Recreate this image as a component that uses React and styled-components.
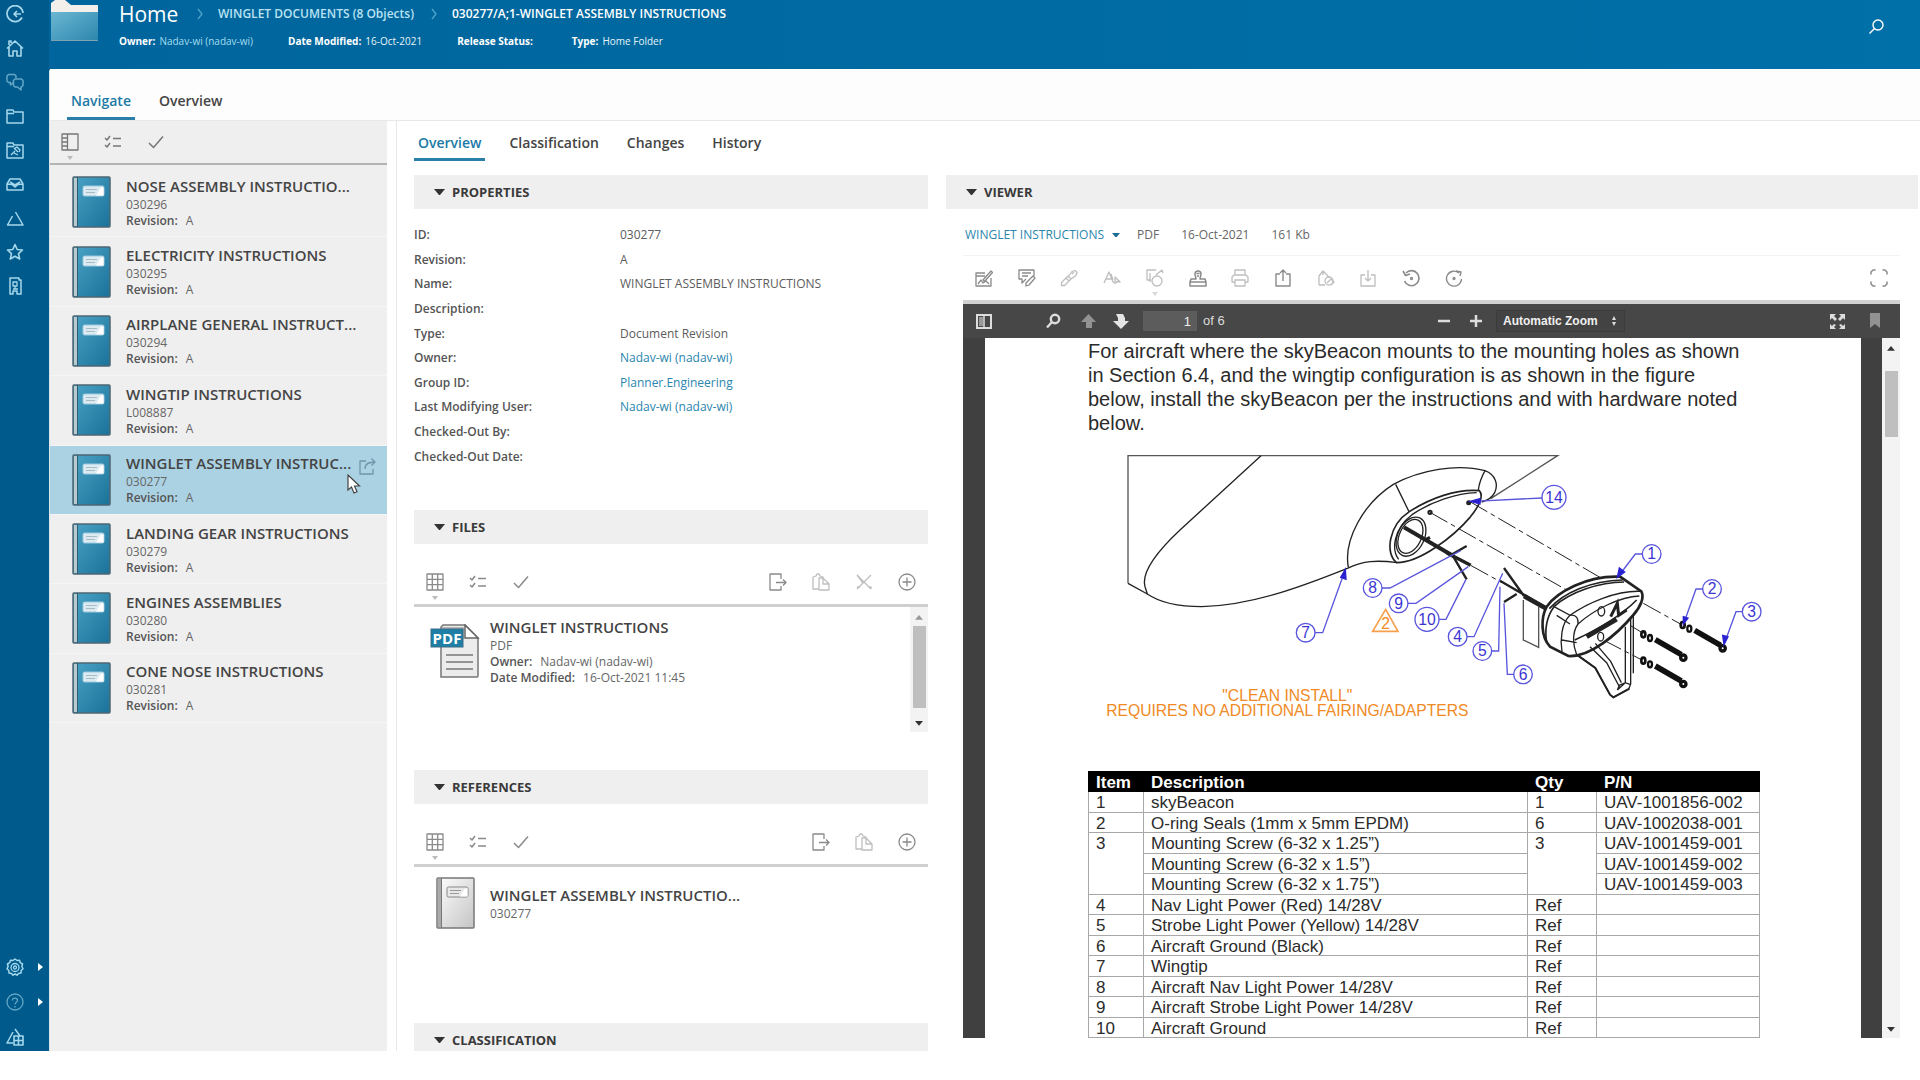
import React from "react";
import styled, { createGlobalStyle, css } from "styled-components";

const GlobalStyle = createGlobalStyle`
  *, *::before, *::after { box-sizing: border-box; }
  body {
    margin: 0;
    background: #fff;
    color: #444;
    font-family: "Open Sans", "Noto Sans", sans-serif;
    font-size: 12px;
    line-height: 16px;
  }
  h1, h2, h3, p, ul, dl, dd, dt { margin: 0; padding: 0; font-weight: inherit; font-size: inherit; }
  ul { list-style: none; }
  button { border: 0; padding: 0; background: none; font: inherit; color: inherit; text-align: left; }
  a { color: inherit; text-decoration: none; }
  svg { display: block; flex: none; }
`;

/* ---------- Shell ---------- */

const Shell = styled.div`
  display: flex;
  height: 100vh;
  padding-bottom: 29px;
  overflow: hidden;
`;

const Rail = styled.nav`
  display: flex;
  flex-direction: column;
  justify-content: space-between;
  width: 49px;
  flex: none;
  padding: 5px 6px;
  background: #005b8c;
  color: #a5d8ec;
`;

const RailGroup = styled.div`
  display: flex;
  flex-direction: column;
  gap: ${(p) => (p.$wide ? "17px" : "16px")};
`;

const RailButton = styled.button`
  display: flex;
  align-items: center;
  justify-content: space-between;
  height: 18px;
  opacity: ${(p) => (p.$dim ? 0.6 : 1)};
`;

const RailRow = styled.div`
  display: flex;
  align-items: center;
  justify-content: space-between;
  color: #a5d8ec;
`;

const Content = styled.div`
  display: flex;
  flex-direction: column;
  flex: 1;
  min-width: 0;
  background: linear-gradient(90deg, #00659c, #0070a8);
`;

const Header = styled.header`
  display: flex;
  gap: 18px;
  height: 69px;
  flex: none;
  padding: 0 35px 0 2px;
  color: #fff;
`;

const HeaderText = styled.div`
  flex: 1;
`;

const Crumbs = styled.div`
  display: flex;
  align-items: center;
  height: 28px;
  font-weight: 600;
`;

const HomeTitle = styled.h1`
  width: 77px;
  font-size: 21px;
  line-height: 28px;
  font-weight: 400;
`;

const Crumb = styled.a`
  padding: 0 16px 0 14px;
  color: ${(p) => (p.$current ? "#fff" : "#b9e2f2")};
`;

const Meta = styled.div`
  display: flex;
  align-items: center;
  gap: 35px;
  height: 26px;
  font-size: 10px;
`;

const MetaItem = styled.span`
  b { font-weight: 700; margin-right: 4px; }
  span { color: ${(p) => (p.$link ? "#a5dcf0" : "#e6f4fa")}; }
`;

const SearchButton = styled.button`
  align-self: flex-start;
  padding-top: 18px;
`;

const Panel = styled.div`
  display: flex;
  flex-direction: column;
  flex: 1;
  min-height: 0;
  border-left: 1px solid #d9e4ea;
  border-top-left-radius: 3px;
  background: #fff;
`;

const TabBar = styled.div`
  display: flex;
  gap: 20px;
  flex: none;
  height: ${(p) => p.$height}px;
  ${(p) =>
    p.$primary &&
    css`
      padding-left: 17px;
      background: #fdfdfd;
      border-bottom: 1px solid #e8e8e8;
    `}
`;

const Tab = styled.button`
  display: flex;
  align-items: flex-start;
  padding: ${(p) => (p.$primary ? "22px" : "12px")} 4px 0;
  border-bottom: 3px solid ${(p) => (p.$active ? "#2a7fa8" : "transparent")};
  color: ${(p) => (p.$active ? "#1b7aa6" : "#444")};
  font-size: 14px;
  line-height: 20px;
  font-weight: 600;
`;

const Columns = styled.div`
  display: flex;
  flex: 1;
  min-height: 0;
`;

/* ---------- Navigation list ---------- */

const NavPane = styled.section`
  display: flex;
  flex-direction: column;
  width: 337px;
  flex: none;
  background: #efefef;
`;

const NavTools = styled.div`
  display: flex;
  align-items: center;
  gap: 25px;
  height: 44px;
  padding: 0 11px;
  border-bottom: 2px solid #b4b4b4;
  color: #777;
`;

const NavList = styled.ul`
  display: grid;
  grid-template-columns: minmax(0, 1fr);
  grid-auto-rows: 1fr;
  height: 558px;
  padding-top: 3px;
`;

const NavItem = styled.li`
  position: relative;
  display: flex;
  align-items: center;
  padding: 0 11px 0 22px;
  border-bottom: 1px solid #f5f5f5;
  background: ${(p) => (p.$selected ? "#abd2e3" : "transparent")};
`;

const ShareButton = styled.button`
  align-self: flex-start;
  margin-left: auto;
  padding-top: 11px;
  color: #6f97aa;
`;

const Pointer = styled.svg`
  position: absolute;
  left: 297px;
  top: 28px;
`;

const Entry = styled.button`
  display: block;
  margin-left: 15px;
  white-space: nowrap;
`;

const EntryTitle = styled.span`
  display: block;
  color: #444;
  font-size: 15px;
  line-height: 21px;
  font-weight: 600;
`;

const EntryLine = styled.span`
  display: block;
  color: #666;
  b { margin-right: 8px; font-weight: 600; color: #555; }
`;

/* ---------- Detail ---------- */

const Detail = styled.main`
  display: flex;
  flex-direction: column;
  flex: 1;
  min-width: 0;
  margin-left: 9px;
  padding: 0 2px 0 17px;
  border-left: 1px solid #e6e6e6;
`;

const DetailGrid = styled.div`
  display: grid;
  grid-template-columns: 514fr 972fr;
  gap: 18px;
  flex: 1;
  min-height: 0;
  padding-top: 14px;
`;

const DetailColumn = styled.div`
  display: flex;
  flex-direction: column;
  min-width: 0;
  min-height: 0;
  overflow: hidden;
`;

const SectionBar = styled.h2`
  display: flex;
  align-items: center;
  gap: 7px;
  height: 34px;
  flex: none;
  padding-left: 20px;
  background: #efefef;
  color: #3a3a3a;
  font-size: 13px;
  font-weight: 700;
`;

const Properties = styled.dl`
  display: grid;
  grid-template-columns: 206px 1fr;
  grid-auto-rows: 1fr;
  align-items: center;
  height: 246px;
  flex: none;
  margin: 14px 0 41px;
  dt { font-weight: 600; color: #555; }
  dd { color: #5c5c5c; }
  a { color: #2a86ad; }
`;

const Tools = styled.div`
  display: flex;
  align-items: center;
  gap: 25px;
  height: 47px;
  flex: none;
  margin-top: 16px;
  padding: 0 12px;
  border-bottom: 3px solid #cfcfcf;
  color: #8a8a8a;
`;

const ToolSpacer = styled.span`
  flex: 1;
`;

const IconButton = styled.button`
  position: relative;
  width: 18px;
  height: 18px;
  opacity: ${(p) => (p.$dim ? 0.55 : 1)};
`;

const Caret = styled.svg`
  position: absolute;
  left: 6px;
  top: 23px;
`;

const Results = styled.div`
  display: flex;
  flex: none;
  height: ${(p) => p.$height}px;
  margin-bottom: 38px;
`;

const ResultItem = styled.div`
  display: flex;
  align-items: ${(p) => (p.$centered ? "center" : "flex-start")};
  align-self: flex-start;
  flex: 1;
  padding: ${(p) => (p.$centered ? "9px 0 0 22px" : "10px 0 0 16px")};
`;

const ResultIcon = styled.div`
  width: 45px;
  padding-top: ${(p) => (p.$drop ? "7px" : "0")};
`;

const Scrollbar = styled.div`
  display: flex;
  flex-direction: column;
  align-items: center;
  width: 18px;
  flex: none;
  padding: 8px 0 6px;
  background: #f3f3f3;
`;

const Thumb = styled.div`
  width: 13px;
  height: ${(p) => p.$height}px;
  margin-top: ${(p) => p.$top}px;
  margin-bottom: auto;
  background: #bfbfbf;
`;

/* ---------- Viewer ---------- */

const ViewerBody = styled.div`
  display: flex;
  flex-direction: column;
  flex: 1;
  min-height: 0;
  padding: 0 18px 13px 17px;
`;

const FileInfo = styled.div`
  display: flex;
  align-items: center;
  gap: 22px;
  height: 47px;
  flex: none;
  padding: 6px 0 0 2px;
  border-bottom: 1px solid #f3f3f3;
  color: #666;
`;

const FilePicker = styled.button`
  display: flex;
  align-items: center;
  gap: 8px;
  margin-right: -5px;
  color: #2a86ad;
`;

const ViewerTools = styled.div`
  display: flex;
  align-items: center;
  justify-content: space-between;
  height: 48px;
  flex: none;
  padding: 0 12px;
  border-bottom: 4px solid #d2d2d2;
  color: #8a8a8a;
`;

const ToolStrip = styled.div`
  display: flex;
  justify-content: space-between;
  width: 488px;
`;

const PdfFrame = styled.div`
  display: flex;
  flex-direction: column;
  flex: 1;
  min-height: 0;
  background: #404040;
  font-family: "Liberation Sans", Arial, sans-serif;
`;

const PdfTools = styled.div`
  display: flex;
  align-items: center;
  height: 34px;
  flex: none;
  padding: 0 19px 0 12px;
  background: #474747;
  color: #ddd;
  font-size: 13px;
`;

const PdfButton = styled.button`
  margin-right: ${(p) => p.$after || 0}px;
  opacity: ${(p) => (p.$dim ? 0.5 : 1)};
`;

const PageInput = styled.input`
  width: 54px;
  height: 20px;
  margin: 0 6px 0 14px;
  padding: 0 6px;
  border: 0;
  background: #5c5c5c;
  color: #f0f0f0;
  font: 13px "Liberation Sans", Arial, sans-serif;
  text-align: right;
`;

const ZoomBox = styled.label`
  display: flex;
  align-items: center;
  width: 129px;
  height: 22px;
  padding: 0 7px 0 6px;
  background: #434343;
  border: 1px solid #3c3c3c;
`;

const ZoomSelect = styled.select`
  flex: 1;
  min-width: 0;
  appearance: none;
  border: 0;
  padding: 0;
  background: transparent;
  color: #f0f0f0;
  font: 700 12px "Liberation Sans", Arial, sans-serif;
`;

const PdfEnd = styled.div`
  display: flex;
  align-items: center;
  margin-left: 204px;
`;

const PdfStage = styled.div`
  display: flex;
  flex: 1;
  min-height: 0;
  padding-left: 22px;
`;

const PdfPage = styled.article`
  flex: 1;
  min-width: 0;
  margin-right: 21px;
  padding: 0 102px 0 103px;
  overflow: hidden;
  background: #fff;
  color: #2b2b2b;
`;

const Paragraph = styled.p`
  padding-top: 1px;
  font-size: 20px;
  line-height: 24px;
  span { display: block; white-space: nowrap; }
`;

const Figure = styled.svg`
  width: 100%;
  margin: 5px 0 31px;
  overflow: visible;
  font-family: "Liberation Sans", Arial, sans-serif;
`;

const Parts = styled.table`
  width: 100%;
  height: 267px;
  table-layout: fixed;
  border-collapse: collapse;
  font-size: 17px;
  line-height: 16px;
  th, td {
    padding: 3px 7px 0;
    border: 1px solid #a8a8a8;
    text-align: left;
    vertical-align: top;
    white-space: nowrap;
  }
  th { background: #000; color: #fff; border-color: #000; font-weight: 700; }
`;

const Col = styled.col`
  width: ${(p) => p.$w}px;
`;

/* ---------- Icons ---------- */

const Icon = ({ size = 18, sw = 1.3, children }) => (
  <svg width={size} height={size} viewBox="0 0 18 18" fill="none" stroke="currentColor" strokeWidth={sw} strokeLinejoin="round" aria-hidden="true">
    {children}
  </svg>
);

const Triangle = ({ dir = "down", w = 11, color = "#333" }) => {
  const pts = { down: "0,0 10,0 5,6", up: "0,6 10,6 5,0" }[dir];
  return (
    <svg width={w} height={(w * 6) / 10} viewBox="0 0 10 6" aria-hidden="true">
      <polygon points={pts} fill={color} />
    </svg>
  );
};

const icons = {
  back: <><path d="M16 12.500A8 8 0 1 1 17 8" strokeWidth="1.700" /><path d="M15 9H8M11 6 8 9l3 3" strokeWidth="1.700" /></>,
  home: <><path d="M1 9.500 9 2l8 7.500M3 8v9h4v-5h4v5h4V8M3 6V2h2v2" strokeWidth="1.600" /></>,
  chat: <><path d="M7.500 9.500 4.500 12V9.500H2.500L1 8V3l1.500-1.500h6L10 3v2.500" strokeWidth="1.500" /><path d="M9 6h6.500L17 7.500v5L15.500 14H15v3l-3.500-3H9l-1.500-1.500v-5z" strokeWidth="1.500" /></>,
  folder: <path d="M1 3h6l1 2h9v11H1zM1 6.500h7" strokeWidth="1.500" />,
  folderPin: <><path d="M1 2h6l1 2h9v13H1zM1 5.500h7" strokeWidth="1.500" /><path d="m5 14 4-4m-1-3 4 4m-3-4 2-1 3 3-1 2M8 12l4 2" /></>,
  inbox: <><path d="M1 9v6h16V9l-3-5H4zM1 9l5 .5 3 2.500 3-2.500 5-.5M4 7l5 3 5-3" strokeWidth="1.500" /></>,
  triangle: <path d="M9.500 3 17 16H1.500L6.500 7" strokeWidth="1.500" />,
  star: <path d="m9 1.500 2.200 5 5.300.5-4 3.600 1.200 5.400L9 13.200 4.300 16l1.200-5.400-4-3.600 5.300-.5z" strokeWidth="1.600" />,
  doc: <><path d="M4 1h9v2h2v14h-4v-3H7v3H4z" strokeWidth="1.500" /><path d="M7 5h4v4H7zM9 9v3M7 12h5" /></>,
  gear: <><path d="m9 1 2 1.500 2.500-.2.800 2.400L16.500 6l-.6 2.500 1.100 2.300-1.800 1.700-.2 2.500-2.500.4L11 17.200 9 16l-2 1.200-1.500-1.800-2.500-.4-.2-2.500L1 10.800l1.100-2.300L1.500 6l2.200-1.300.800-2.400 2.500.2z" strokeWidth="1.500" /><circle cx="9" cy="9.500" r="4" /><circle cx="9" cy="9.500" r="1.500" /></>,
  help: <><circle cx="9" cy="9" r="8" /><path d="M6.500 7.500C6.500 4 11.500 4.500 11.500 7.500 11.500 9 9 9 9 11.500M9 13v1.500" /></>,
  warnGrid: <><path d="m9 1 5 7M7 4 1 15h6" strokeWidth="1.500" /><path d="M8 8h9v9H8zM8 12.500h9M12.500 8v9" strokeWidth="1.600" /></>,
  search: <><circle cx="11" cy="7" r="5" strokeWidth="1.400" /><path d="m7.500 10.500-5 5" strokeWidth="1.400" /></>,
  pane: <><path d="M1 1h16v16H1zM6.500 1v16M1 5h5.500M1 9h5.500M1 13h5.500" /></>,
  list: <><path d="m1 5 2 2 3-4M1 12l2 2 3-4M9 5.500h8M9 13h8" strokeWidth="1.500" /></>,
  check: <path d="m2 10 4.500 4.500L16 3.500" strokeWidth="1.500" />,
  grid: <path d="M1 1h16v16H1zM1 6.300h16M1 11.700h16M6.300 1v16M11.700 1v16" />,
  exit: <><path d="M12 6V1H1v16h11v-4M7 9.500h10M14 6.500l3 3-3 3" /></>,
  paste: <><path d="M7 16H1V4l3-1 1-2h2l1 2 3 1v2" /><path d="M7 5v12h10v-6l-6-6zM11 5v6h6" /></>,
  cut: <path d="m2 2 14 14M16 2 2 16M2 2l6 8M14 14h2v2M2 14h3" />,
  plus: <><circle cx="9" cy="9" r="8" /><path d="M9 4.500v9M4.500 9h9" /></>,
  share: <><path d="M8 4H2v13h13v-5M7 12c0-5 3-7 10-7M13.500 1.500 17 5l-3.500 3.500" /></>,
  annotate: <><path d="M10 4H1v13h15V9M1 7h9" /><path d="m8 11 8-9 1.500 1.500-8 9zM3 15l3-4 2 3 3-2 3 3" /></>,
  comment: <><path d="M16 7V1H1v9h3v4l4-4M4 4h9M4 7h6" /><path d="m8 14 7-7 2 2-6 7-3 1z" /></>,
  pen: <path d="M1.500 13.500 6 9l3 3-4.500 4.500H1.500zM6 9l2-2 3 3-2 2M8.500 7.500l3.500-5 3-1 2 2-1 3-5 3.500M12 5l2-2" />,
  text: <path d="m1 14 5-11 4.500 11M3 10h6M8 5l2 6M12 8l5 5-3-.5-2 2z" />,
  shapes: <><path d="M10 1H1v10h4M4 4v9M10 6l6-5 1 3" /><circle cx="11" cy="12" r="5" /></>,
  stamp: <><path d="M6 5a3 3 0 1 1 6 0c0 2-1 3-1 5h5l1 3H1l1-3h5c0-2-1-3-1-5zM1 13h16v4H1z" strokeWidth="1.500" /><path d="M7.500 4.500h3M8 7h2" strokeWidth="1.500" /></>,
  print: <><path d="M4 6V1h10v5M4 13H1V8l2-2h12l2 2v5h-3M4 11h10v6H4z" /></>,
  upload: <><path d="M6 5H2v12h14V5h-4M9 12V1M6 4l3-3 3 3" strokeWidth="1.400" /></>,
  packageOut: <><path d="M2 16V7l4-5 5 5v2M2 16h6M6 2v4" /><circle cx="12" cy="12" r="4" /><path d="m10 14 4-4 3 3-3 3" /></>,
  download: <><path d="M6 6H2v11h14V6h-4M9 1v11M6 9l3 3 3-3" /></>,
  undo: <><path d="M4 4a7.500 7.500 0 1 1-1.500 8M1 2l2.500 4.500L8 5" strokeWidth="1.600" /><circle cx="9.500" cy="9.500" r="1" /></>,
  redo: <><path d="M14 4a7.500 7.500 0 1 0 2.500 6M11 2l5 1-1 4" strokeWidth="1.400" /><circle cx="9" cy="9.500" r="1" /></>,
  expand: <path d="M1 5.500V3l2-2h2.500M12.500 1H15l2 2v2.500M17 12.500V15l-2 2h-2.500M5.500 17H3l-2-2v-2.500" strokeWidth="1.500" />,
};

const Book = ({ gray, h = 52 }) => {
  const id = gray ? "bookGray" : "bookBlue";
  return (
    <svg width="39" height={h} viewBox="0 0 39 52" aria-hidden="true">
      <defs>
        <linearGradient id={id} x1="0" y1="0" x2="1" y2="1">
          <stop offset="0" stopColor={gray ? "#fff" : "#4ba3c7"} />
          <stop offset="1" stopColor={gray ? "#c4c4c4" : "#1a7299"} />
        </linearGradient>
      </defs>
      <rect x="1" y="1" width="37" height="50" rx="1" fill={`url(#${id})`} stroke={gray ? "#777" : "#4d6773"} strokeWidth="1.500" />
      <rect x="2" y="2" width="3" height="48" fill={gray ? "#aaa" : "#b9c9d0"} />
      <path d="M5.500 1v50" stroke={gray ? "#777" : "#2f5d70"} />
      <rect x="11" y="10" width="21" height="10" rx="1.500" fill={gray ? "#e8e8e8" : "#dcebf2"} stroke={gray ? "#888" : "#9ccadd"} />
      <path d="M14 13.500h11M14 16.500h9" stroke={gray ? "#999" : "#a9bcc5"} />
      <path d="m24 19.500 5-8h2.500v8z" fill="#fff" />
    </svg>
  );
};

const Folder = () => (
  <svg width="50" height="42" viewBox="0 0 50 42" aria-hidden="true">
    <defs>
      <linearGradient id="folderFill" x1="0" y1="0" x2="1" y2="1">
        <stop offset="0" stopColor="#6cb7d2" />
        <stop offset="1" stopColor="#2b86ad" />
      </linearGradient>
    </defs>
    <path d="M0 14V3L4 0h10l6 5h27v9z" fill="#f3f0ec" />
    <path d="M0 12h47v29H0z" fill="url(#folderFill)" />
    <path d="M0 40.500h47" stroke="#7fa3b3" />
  </svg>
);

const PdfFile = () => (
  <svg width="50" height="54" viewBox="0 0 50 54" aria-hidden="true">
    <path d="M11 3 13 1h22l13 13v38a1 1 0 0 1-1 1H11z" fill="#ececec" stroke="#777" strokeWidth="1.500" />
    <path d="M12 3h22v12H12z" fill="#b5b5b5" />
    <path d="M35 1v13h13z" fill="#fff" stroke="#666" strokeWidth="1.500" />
    <path d="M16 31h27M16 38h27M16 45h27" stroke="#777" strokeWidth="1.700" />
    <rect x="1" y="5" width="32" height="18" fill="#1f7ea6" stroke="#3c6c82" />
    <text x="17" y="20" textAnchor="middle" fontFamily="Open Sans, sans-serif" fontSize="15" fontWeight="700" fill="#fff">PDF</text>
  </svg>
);

const Tool = ({ name, label, dim, caret }) => (
  <IconButton type="button" aria-label={label} $dim={dim}>
    <Icon>{icons[name]}</Icon>
    {caret && (
      <Caret width="6" height="4" viewBox="0 0 6 4" aria-hidden="true">
        <path d="M0 0h6L3 4z" fill="#bbb" />
      </Caret>
    )}
  </IconButton>
);

/* ---------- Drawing of the wingtip assembly ---------- */

const callouts = [
  { n: "14", x: 1362, y: 172, r: 36, line: "M1326 174 L1120 184", tip: "1110,184 1140,176 1140,192" },
  { n: "1", x: 1655, y: 342, r: 28, line: "M1627 342 H1606 L1556 408", tip: "1552,412 1558,384 1574,396" },
  { n: "2", x: 1836, y: 447, r: 28, line: "M1808 447 H1788 L1752 548", tip: "1750,552 1750,530 1764,534" },
  { n: "3", x: 1955, y: 515, r: 28, line: "M1927 515 H1908 L1874 608", tip: "1872,614 1868,586 1884,590" },
  { n: "8", x: 818, y: 444, r: 28, line: "M846 444 H870 L1082 332" },
  { n: "9", x: 896, y: 490, r: 28, line: "M924 490 H948 L1105 380" },
  { n: "10", x: 981, y: 538, r: 36, line: "M1017 538 H1038 L1098 418" },
  { n: "7", x: 617, y: 578, r: 28, line: "M645 578 H668 L732 400", tip: "736,388 722,412 738,418" },
  { n: "4", x: 1073, y: 590, r: 28, line: "M1101 590 H1122 L1208 400" },
  { n: "5", x: 1147, y: 633, r: 28, line: "M1175 633 H1196 L1200 440" },
  { n: "6", x: 1269, y: 703, r: 28, line: "M1241 703 H1222 L1212 490" },
];

const Screw = ({ x, y }) => (
  <g transform={`translate(${x} ${y})`}>
    <ellipse cx="0" cy="0" rx="6" ry="9" strokeWidth="8" />
    <ellipse cx="20" cy="11" rx="6" ry="9" strokeWidth="7" />
    <path d="m36 16 78 45" strokeWidth="17" />
    <circle cx="120" cy="70" r="8" strokeWidth="10" />
  </g>
);

const Wingtip = () => (
  <Figure viewBox="-36 0 2013 900" role="img" aria-label="Wingtip assembly drawing">
    <g fill="none" stroke="#222" strokeWidth="4">
      <path d="M84 430V47H1373L1172 176" stroke="#555" />
      <path d="M84 430 142 462C180 488 230 500 305 500 450 496 590 446 742 385 790 362 830 360 892 368" />
      <path d="M483 47 240 270C160 345 124 400 135 440L142 462" />
      <path d="M745 382C730 300 790 190 880 133 960 90 1070 70 1155 92 1186 104 1196 132 1184 158 1176 174 1160 182 1145 186M887 133l40 82M1155 92c-12 22-18 40-20 58" />
      <path d="M890 368C854 340 866 256 928 215 990 175 1070 146 1138 152 1152 168 1136 200 1110 232 1060 290 960 368 890 368z" strokeWidth="5" />
      <path d="M896 358C874 330 880 266 936 224 995 184 1070 160 1130 158" />
      <g transform="rotate(25 933 290)">
        <ellipse cx="933" cy="290" rx="40" ry="62" />
        <ellipse cx="931" cy="290" rx="33" ry="54" />
      </g>
      <circle cx="990" cy="217" r="5" strokeWidth="6" />
      <circle cx="1106" cy="188" r="4" strokeWidth="7" />
      <path d="M912 262 1060 348" strokeWidth="12" />
      <path d="m1040 338 72 38M976 300l14-8" strokeWidth="10" />
      <path d="m1054 344 46-26M1060 350l40 68" strokeWidth="7" />
      <g strokeDasharray="60 12 14 12" strokeWidth="3">
        <path d="M990 217 1400 450" />
        <path d="M1110 185 1510 418" />
        <path d="M1112 376 1206 428" />
        <path d="M1630 490 1745 554" />
        <path d="M1590 556 1630 580M1510 600 1626 660" />
      </g>
      <g transform="translate(900 60)">
        <path d="M312 324 372 408M300 362 440 444M312 426 350 402" strokeWidth="7" />
        <path d="M372 408 440 446" strokeWidth="14" />
        <path d="M370 420V540L416 562V440" stroke="#555" />
        <path d="M440 440C470 396 560 346 660 350L724 394C734 412 722 440 700 465 650 524 570 592 505 588L450 560C422 530 422 474 440 440z" fill="#fff" strokeWidth="8" />
        <path d="M448 446C490 400 570 362 668 360M440 548C434 510 440 470 462 440 510 396 600 366 672 366" strokeWidth="5" />
        <path d="M462 440 510 466C560 430 650 390 724 394M510 466C484 490 480 540 486 576M534 492C580 450 660 410 718 408M534 492C514 520 520 560 530 584M486 540 530 548M510 466C530 462 536 478 534 492M470 466l40 26" />
        <path d="M524 540C590 510 660 470 710 420" strokeWidth="5" />
        <ellipse cx="604" cy="454" rx="10" ry="14" />
        <ellipse cx="602" cy="530" rx="9" ry="13" />
        <path d="M560 530 650 478" strokeWidth="14" />
        <path d="M632 470 652 430 656 466 680 450" strokeWidth="9" />
        <path d="M530 584 586 624 630 704 640 712 686 688 692 672V470M676 500V668L652 690M570 560 620 608 660 684M586 550 632 604 664 668M652 690l6-14 18-8 16 6M700 466V640" strokeWidth="4" />
        <path d="M530 584 586 624 630 704 640 712 688 686" strokeWidth="6" />
      </g>
      <g stroke="#111">
        <Screw x={1748} y={555} />
        <Screw x={1630} y={583} />
        <Screw x={1630} y={662} />
      </g>
    </g>
    <g stroke="#5a55dc" fill="none" strokeWidth="4">
      {callouts.map((c) => (
        <React.Fragment key={c.n}>
          <circle cx={c.x} cy={c.y} r={c.r} />
          <path d={c.line} />
          {c.tip && <polygon points={c.tip} fill="#2a22d0" stroke="#2a22d0" />}
        </React.Fragment>
      ))}
    </g>
    <g fill="#3a34d2" fontSize="47" textAnchor="middle">
      {callouts.map((c) => (
        <text key={c.n} x={c.x} y={c.y + 16}>{c.n}</text>
      ))}
    </g>
    <path d="M857 508 894 574H818z" fill="none" stroke="#f5a04c" strokeWidth="5" />
    <g fill="#f08a24" textAnchor="middle" fontSize="47">
      <text x="857" y="568">2</text>
      <text x="562" y="782">"CLEAN INSTALL"</text>
      <text x="562" y="828">REQUIRES NO ADDITIONAL FAIRING/ADAPTERS</text>
    </g>
  </Figure>
);

/* ---------- Data ---------- */

const documents = [
  ["NOSE ASSEMBLY INSTRUCTIO...", "030296"],
  ["ELECTRICITY INSTRUCTIONS", "030295"],
  ["AIRPLANE GENERAL INSTRUCT...", "030294"],
  ["WINGTIP INSTRUCTIONS", "L008887"],
  ["WINGLET ASSEMBLY INSTRUC...", "030277"],
  ["LANDING GEAR INSTRUCTIONS", "030279"],
  ["ENGINES ASSEMBLIES", "030280"],
  ["CONE NOSE INSTRUCTIONS", "030281"],
];

const properties = [
  ["ID:", "030277"],
  ["Revision:", "A"],
  ["Name:", "WINGLET ASSEMBLY INSTRUCTIONS"],
  ["Description:", ""],
  ["Type:", "Document Revision"],
  ["Owner:", "Nadav-wi (nadav-wi)", true],
  ["Group ID:", "Planner.Engineering", true],
  ["Last Modifying User:", "Nadav-wi (nadav-wi)", true],
  ["Checked-Out By:", ""],
  ["Checked-Out Date:", ""],
];

const viewerTools = [
  ["annotate", "Markup"],
  ["comment", "Comment"],
  ["pen", "Pen", true],
  ["text", "Text", true],
  ["shapes", "Shapes", true, true],
  ["stamp", "Stamp"],
  ["print", "Print", true],
  ["upload", "Export"],
  ["packageOut", "Package", true],
  ["download", "Download", true],
  ["undo", "Undo"],
  ["redo", "Redo"],
];

const refRows = [
  ["4", "Nav Light Power (Red) 14/28V"],
  ["5", "Strobe Light Power (Yellow) 14/28V"],
  ["6", "Aircraft Ground (Black)"],
  ["7", "Wingtip"],
  ["8", "Aircraft Nav Light Power 14/28V"],
  ["9", "Aircraft Strobe Light Power 14/28V"],
  ["10", "Aircraft Ground"],
];

const railIcons = [
  ["back", "Back"],
  ["home", "Home"],
  ["chat", "Discussions", true],
  ["folder", "Folders"],
  ["folderPin", "Pinned folders"],
  ["inbox", "Inbox"],
  ["triangle", "Changes"],
  ["star", "Favorites"],
  ["doc", "Documents"],
];

/* ---------- Page parts ---------- */

const Section = ({ children }) => (
  <SectionBar>
    <Triangle />
    {children}
  </SectionBar>
);

const Chevron = () => (
  <svg width="8" height="12" viewBox="0 0 8 12" fill="none" stroke="#4fa5cc" strokeWidth="1.300" aria-hidden="true">
    <path d="m2 1 4 5-4 5" />
  </svg>
);

const SideRail = () => (
  <Rail aria-label="Main">
    <RailGroup>
      {railIcons.map(([name, label, dim]) => (
        <RailButton key={name} type="button" aria-label={label} $dim={dim}>
          <Icon>{icons[name]}</Icon>
        </RailButton>
      ))}
    </RailGroup>
    <RailGroup $wide>
      {[["gear", "Settings", false, true], ["help", "Help", true, true], ["warnGrid", "Alerts", false, false]].map(([name, label, dim, arrow]) => (
        <RailRow key={name}>
          <RailButton type="button" aria-label={label} $dim={dim}>
            <Icon>{icons[name]}</Icon>
          </RailButton>
          {arrow && (
            <svg width="5" height="8" viewBox="0 0 5 8" aria-hidden="true">
              <path d="M0 0l5 4-5 4z" fill="#fff" />
            </svg>
          )}
        </RailRow>
      ))}
    </RailGroup>
  </Rail>
);

const Navigation = () => (
  <NavPane>
    <NavTools>
      <Tool name="pane" label="View" caret />
      <Tool name="list" label="Select multiple" />
      <Tool name="check" label="Select" />
    </NavTools>
    <NavList>
      {documents.map(([title, id], i) => (
        <NavItem key={id} $selected={i === 4}>
          <Book />
          <Entry type="button">
            <EntryTitle>{title}</EntryTitle>
            <EntryLine>{id}</EntryLine>
            <EntryLine><b>Revision:</b>A</EntryLine>
          </Entry>
          {i === 4 && (
            <>
              <ShareButton type="button" aria-label="Open">
                <Icon>{icons.share}</Icon>
              </ShareButton>
              <Pointer width="14" height="20" viewBox="0 0 14 20" aria-hidden="true">
                <path d="M1 1v15l3.500-3 2.500 6 3-1.300-2.500-5.700H12.500z" fill="#fff" stroke="#444" strokeWidth="1.200" />
              </Pointer>
            </>
          )}
        </NavItem>
      ))}
    </NavList>
  </NavPane>
);

const Summary = () => (
  <DetailColumn>
    <Section>PROPERTIES</Section>
    <Properties>
      {properties.map(([label, value, link]) => (
        <React.Fragment key={label}>
          <dt>{label}</dt>
          <dd>{link ? <a href="#open">{value}</a> : value}</dd>
        </React.Fragment>
      ))}
    </Properties>
    <Section>FILES</Section>
    <Tools>
      <Tool name="grid" label="View" caret />
      <Tool name="list" label="Select multiple" />
      <Tool name="check" label="Select" />
      <ToolSpacer />
      <Tool name="exit" label="Open" />
      <Tool name="paste" label="Paste" dim />
      <Tool name="cut" label="Cut" dim />
      <Tool name="plus" label="Add" />
    </Tools>
    <Results $height={125}>
      <ResultItem>
        <ResultIcon $drop>
          <PdfFile />
        </ResultIcon>
        <Entry type="button">
          <EntryTitle>WINGLET INSTRUCTIONS</EntryTitle>
          <EntryLine>PDF</EntryLine>
          <EntryLine><b>Owner:</b>Nadav-wi (nadav-wi)</EntryLine>
          <EntryLine><b>Date Modified:</b>16-Oct-2021 11:45</EntryLine>
        </Entry>
      </ResultItem>
      <Scrollbar aria-hidden="true">
        <Triangle dir="up" w={8} color="#999" />
        <Thumb $height={82} $top={6} />
        <Triangle w={8} />
      </Scrollbar>
    </Results>
    <Section>REFERENCES</Section>
    <Tools>
      <Tool name="grid" label="View" caret />
      <Tool name="list" label="Select multiple" />
      <Tool name="check" label="Select" />
      <ToolSpacer />
      <Tool name="exit" label="Open" />
      <Tool name="paste" label="Paste" dim />
      <Tool name="plus" label="Add" />
    </Tools>
    <Results $height={118}>
      <ResultItem $centered>
        <Book gray h={54} />
        <Entry type="button">
          <EntryTitle>WINGLET ASSEMBLY INSTRUCTIO...</EntryTitle>
          <EntryLine>030277</EntryLine>
        </Entry>
      </ResultItem>
    </Results>
    <Section>CLASSIFICATION</Section>
  </DetailColumn>
);

const PartsTable = () => (
  <Parts>
    <colgroup>
      <Col $w={55} />
      <Col $w={384} />
      <Col $w={69} />
      <Col $w={163} />
    </colgroup>
    <thead>
      <tr><th>Item</th><th>Description</th><th>Qty</th><th>P/N</th></tr>
    </thead>
    <tbody>
      <tr><td>1</td><td>skyBeacon</td><td>1</td><td>UAV-1001856-002</td></tr>
      <tr><td>2</td><td>O-ring Seals (1mm x 5mm EPDM)</td><td>6</td><td>UAV-1002038-001</td></tr>
      <tr><td rowSpan={3}>3</td><td>Mounting Screw (6-32 x 1.25”)</td><td rowSpan={3}>3</td><td>UAV-1001459-001</td></tr>
      <tr><td>Mounting Screw (6-32 x 1.5”)</td><td>UAV-1001459-002</td></tr>
      <tr><td>Mounting Screw (6-32 x 1.75”)</td><td>UAV-1001459-003</td></tr>
      {refRows.map(([n, text]) => (
        <tr key={n}><td>{n}</td><td>{text}</td><td>Ref</td><td /></tr>
      ))}
    </tbody>
  </Parts>
);

const Viewer = () => (
  <DetailColumn>
    <Section>VIEWER</Section>
    <ViewerBody>
      <FileInfo>
        <FilePicker type="button">
          WINGLET INSTRUCTIONS
          <Triangle w={8} color="#1b6d96" />
        </FilePicker>
        <span>PDF</span>
        <span>16-Oct-2021</span>
        <span>161 Kb</span>
      </FileInfo>
      <ViewerTools>
        <ToolStrip>
          {viewerTools.map(([name, label, dim, caret]) => (
            <Tool key={name} name={name} label={label} dim={dim} caret={caret} />
          ))}
        </ToolStrip>
        <Tool name="expand" label="Full screen" />
      </ViewerTools>
      <PdfFrame>
        <PdfTools>
          <PdfButton type="button" aria-label="Toggle sidebar" $after={52}>
            <svg width="18" height="18" viewBox="0 0 18 18"><path d="M2 3h14v13H2z" fill="none" stroke="#ddd" strokeWidth="2" /><path d="M4 5h4v9H4z" fill="#999" /><path d="M9 4v11" stroke="#ddd" strokeWidth="1.500" /></svg>
          </PdfButton>
          <PdfButton type="button" aria-label="Find" $after={20}>
            <svg width="16" height="16" viewBox="0 0 16 16" fill="none" stroke="#ddd" strokeWidth="2.400"><circle cx="10" cy="6" r="4.200" /><path d="m7 9-5 5.500" /></svg>
          </PdfButton>
          <PdfButton type="button" aria-label="Previous page" $after={17} $dim>
            <svg width="15" height="15" viewBox="0 0 15 15"><path d="M7.500 0 15 8h-4v6H5V8H0z" fill="#ddd" /></svg>
          </PdfButton>
          <PdfButton type="button" aria-label="Next page">
            <svg width="16" height="16" viewBox="0 0 16 16"><path d="M8 16 0 8h5V5L3 1h7l2 4v3h4z" fill="#e4e4e4" /></svg>
          </PdfButton>
          <PageInput aria-label="Page" defaultValue="1" />
          <span>of 6</span>
          <ToolSpacer />
          <PdfButton type="button" aria-label="Zoom out" $after={20}>
            <svg width="12" height="12" viewBox="0 0 12 12"><path d="M0 6h12" stroke="#ddd" strokeWidth="2.500" /></svg>
          </PdfButton>
          <PdfButton type="button" aria-label="Zoom in" $after={14}>
            <svg width="12" height="12" viewBox="0 0 12 12"><path d="M0 6h12M6 0v12" stroke="#ddd" strokeWidth="2.500" /></svg>
          </PdfButton>
          <ZoomBox>
            <ZoomSelect aria-label="Zoom level" defaultValue="auto">
              <option value="auto">Automatic Zoom</option>
            </ZoomSelect>
            <svg width="6" height="10" viewBox="0 0 6 10" aria-hidden="true"><path d="M1 4 3 0l2 4zM1 6l2 4 2-4z" fill="#ddd" /></svg>
          </ZoomBox>
          <PdfEnd>
            <PdfButton type="button" aria-label="Presentation mode" $after={23}>
              <svg width="17" height="17" viewBox="0 0 17 17" fill="#ddd"><path d="M1 1h6L5 3l3 3-2 2-3-3-2 2zM16 1h-6l2 2-3 3 2 2 3-3 2 2zM1 16h6l-2-2 2-2-2-1-2 2-2-2zM16 16h-6l2-2-2-2 2-1 2 2 2-2z" /></svg>
            </PdfButton>
            <PdfButton type="button" aria-label="Bookmark" $dim>
              <svg width="12" height="16" viewBox="0 0 12 16"><path d="M1 0h10v15l-5-4-5 4z" fill="#ddd" /></svg>
            </PdfButton>
          </PdfEnd>
        </PdfTools>
        <PdfStage>
          <PdfPage>
            <Paragraph>
              <span>For aircraft where the skyBeacon mounts to the mounting holes as shown</span>
              <span>in Section 6.4, and the wingtip configuration is as shown in the figure</span>
              <span>below, install the skyBeacon per the instructions and with hardware noted</span>
              <span>below.</span>
            </Paragraph>
            <Wingtip />
            <PartsTable />
          </PdfPage>
          <Scrollbar aria-hidden="true">
            <Triangle dir="up" w={8} color="#333" />
            <Thumb $height={66} $top={20} />
            <Triangle w={8} />
          </Scrollbar>
        </PdfStage>
      </PdfFrame>
    </ViewerBody>
  </DetailColumn>
);

export default function App() {
  return (
    <>
      <GlobalStyle />
      <Shell>
        <SideRail />
        <Content>
          <Header>
            <Folder />
            <HeaderText>
              <Crumbs>
                <HomeTitle>Home</HomeTitle>
                <Chevron />
                <Crumb href="#documents">WINGLET DOCUMENTS (8 Objects)</Crumb>
                <Chevron />
                <Crumb href="#document" $current>030277/A;1-WINGLET ASSEMBLY INSTRUCTIONS</Crumb>
              </Crumbs>
              <Meta>
                <MetaItem $link><b>Owner:</b><span>Nadav-wi (nadav-wi)</span></MetaItem>
                <MetaItem><b>Date Modified:</b><span>16-Oct-2021</span></MetaItem>
                <MetaItem><b>Release Status:</b></MetaItem>
                <MetaItem><b>Type:</b><span>Home Folder</span></MetaItem>
              </Meta>
            </HeaderText>
            <SearchButton type="button" aria-label="Search">
              <Icon>{icons.search}</Icon>
            </SearchButton>
          </Header>
          <Panel>
            <TabBar $primary $height={52}>
              <Tab type="button" $primary $active>Navigate</Tab>
              <Tab type="button" $primary>Overview</Tab>
            </TabBar>
            <Columns>
              <Navigation />
              <Detail>
                <TabBar $height={40}>
                  <Tab type="button" $active>Overview</Tab>
                  <Tab type="button">Classification</Tab>
                  <Tab type="button">Changes</Tab>
                  <Tab type="button">History</Tab>
                </TabBar>
                <DetailGrid>
                  <Summary />
                  <Viewer />
                </DetailGrid>
              </Detail>
            </Columns>
          </Panel>
        </Content>
      </Shell>
    </>
  );
}
